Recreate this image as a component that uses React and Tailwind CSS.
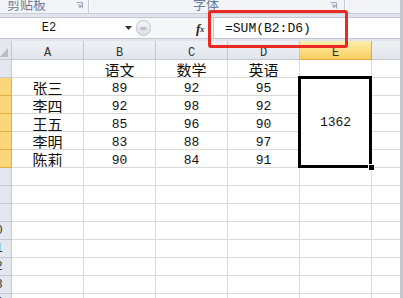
import React from "react";

const COLS = ["A", "B", "C", "D", "E", "F"];
const DATA = [
  ["", "语文", "数学", "英语"],
  ["张三", "89", "92", "95"],
  ["李四", "92", "98", "92"],
  ["王五", "85", "96", "90"],
  ["李明", "83", "88", "97"],
  ["陈莉", "90", "84", "91"],
];
const ROWS = 14;

function Launcher() {
  return (
    <svg width="7" height="7" viewBox="0 0 7 7" className="block">
      <path d="M0.5 0.5 H6.5 V6.5" fill="none" stroke="#9aa6b8" strokeWidth="1" />
      <path d="M2 2 L5 5 M5 2.6 V5 H2.6" fill="none" stroke="#8592a6" strokeWidth="1" />
    </svg>
  );
}

function isCjk(s) {
  return /[\u4e00-\u9fff]/.test(s);
}

function Cell({ text }) {
  const cjk = isCjk(text);
  return (
    <div className="border-r border-b border-[#dadada] flex items-end justify-center overflow-hidden">
      {text ? (
        cjk ? (
          <span className="font-['Noto_Sans_CJK_SC',sans-serif] text-[15px] leading-[15px] text-[#111]">{text}</span>
        ) : (
          <span className="font-['Liberation_Mono',monospace] text-[13px] leading-[13px] text-[#111]">{text}</span>
        )
      ) : null}
    </div>
  );
}

export default function App() {
  const cells = [];
  cells.push(
    <div key="corner" className="bg-[#e4e8ee] border-r border-b border-[#c2c8d1] flex items-end justify-end pr-[3px] pb-[2px]">
      <svg width="8" height="9" viewBox="0 0 8 9" className="block">
        <polygon points="0,9 8,9 8,0" fill="#b7bdc7" />
      </svg>
    </div>
  );
  COLS.forEach((c) => {
    const sel = c === "E";
    cells.push(
      <div
        key={"h" + c}
        className={
          sel
            ? "bg-gradient-to-b from-[#fdeeaa] to-[#f8cd5e] border-r border-b border-[#e2aa3c] flex items-end justify-center"
            : "bg-gradient-to-b from-[#eef1f5] to-[#e2e6ec] border-r border-b border-[#c4cad3] flex items-end justify-center"
        }
      >
        <span className="font-['Liberation_Mono',monospace] text-[12px] leading-[12px] text-[#333]">{c}</span>
      </div>
    );
  });

  for (let r = 1; r <= ROWS; r++) {
    const sel = r >= 2 && r <= 6;
    cells.push(
      <div
        key={"r" + r}
        className={
          sel
            ? "bg-[#fcd67a] border-r border-b border-[#e3ab40] flex items-center justify-center"
            : "bg-[#e4e8ee] border-r border-b border-[#c4cad3] flex items-center justify-center"
        }
      >
        <span className="font-['Liberation_Mono',monospace] text-[12px] leading-[12px] text-[#333]">{r}</span>
      </div>
    );
    const row = DATA[r - 1] || ["", "", "", ""];
    for (let ci = 0; ci < 6; ci++) {
      if (ci < 4) {
        cells.push(<Cell key={r + "-" + ci} text={row[ci]} />);
      } else if (ci === 4) {
        if (r === 2) {
          cells.push(
            <div key="merged" className="row-span-5 relative border-r border-b border-[#dadada] flex items-center justify-center">
              <span className="font-['Liberation_Mono',monospace] text-[13px] leading-[13px] text-[#111]">1362</span>
              <div className="absolute left-[-2px] top-[-2px] right-[-1px] bottom-[-1px] border-[3px] border-black" />
              <div className="absolute right-[-4px] bottom-[-4px] w-[7px] h-[7px] bg-black border border-white" />
            </div>
          );
        } else if (r >= 3 && r <= 6) {
          // covered by the merged cell
        } else {
          cells.push(<Cell key={r + "-" + ci} text="" />);
        }
      } else {
        cells.push(<Cell key={r + "-" + ci} text="" />);
      }
    }
  }

  return (
    <div className="w-[403px] h-[298px] overflow-hidden bg-white relative flex">
      <div className="w-[400px] h-full flex flex-col overflow-hidden">
        {/* Ribbon */}
        <div className="h-[14px] shrink-0 bg-[#f2f4f8] border-b border-[#c6ceda] flex overflow-hidden">
          <div className="w-[88px] flex items-start justify-between pl-[7px] pr-[5px]">
            <span className="mt-[-3px] font-['Noto_Sans_CJK_SC',sans-serif] text-[13px] leading-[13px] text-[#6a7b98]">剪贴板</span>
            <div className="mt-[2px]"><Launcher /></div>
          </div>
          <div className="w-[1px] bg-[#c3cbd7]" />
          <div className="w-[1px] bg-white" />
          <div className="w-[254px] flex items-start pl-[103px] pr-[7px]">
            <span className="mt-[-3px] font-['Noto_Sans_CJK_SC',sans-serif] text-[13px] leading-[13px] text-[#6a7b98]">字体</span>
            <div className="ml-auto mt-[2px]"><Launcher /></div>
          </div>
          <div className="w-[1px] bg-[#c3cbd7]" />
          <div className="w-[1px] bg-white" />
          <div className="flex-1" />
        </div>
        <div className="h-[3px] shrink-0 bg-[#e1e5eb]" />
        {/* Formula bar */}
        <div className="h-[22px] shrink-0 border-t border-b border-[#c3c9d2] flex bg-[#f6f7f9]">
          <div className="w-[137px] bg-white flex items-center">
            <div className="w-[98px] flex justify-center">
              <span className="font-['Liberation_Mono',monospace] text-[12px] leading-[12px] text-[#111]">E2</span>
            </div>
            <svg width="7" height="4" viewBox="0 0 7 4" className="ml-[27px] block">
              <polygon points="0,0 7,0 3.5,4" fill="#333" />
            </svg>
          </div>
          <div className="w-[15px] h-[16px] mt-[2px] -ml-[1px] rounded-full bg-gradient-to-b from-[#f4f5f7] to-[#dcdfe4] border border-[#bfc4cc] flex items-center justify-center">
            <div className="w-[7px] h-[3px] rounded-full bg-[#c9cdd3] border border-[#b2b7bf]" />
          </div>
          <div className="w-[45px]" />
          <div className="w-[17px] flex items-center">
            <span className="font-['Liberation_Serif',serif] italic font-bold text-[13px] leading-[13px] text-[#222]">f</span>
            <span className="font-['Liberation_Serif',serif] italic font-bold text-[8px] leading-[8px] text-[#222] mt-[4px]">x</span>
          </div>
          <div className="flex-1 bg-white border-l border-[#c3c9d2] flex items-center pl-[11px]">
            <span className="font-['Liberation_Mono',monospace] text-[13px] leading-[13px] text-[#111]">=SUM(B2:D6)</span>
          </div>
        </div>
        <div className="h-[2px] shrink-0 bg-[#e1e5eb]" />
        {/* Grid */}
        <div className="-ml-[20px] w-[464px] shrink-0 grid grid-cols-[32px_72px_72px_72px_72px_72px_72px] grid-rows-[19px_repeat(14,18px)]">
          {cells}
        </div>
      </div>
      <div className="w-[3px] h-full bg-[#c4c8ce]" />
      {/* Red annotation */}
      <div className="absolute left-[208px] top-[10px] w-[140px] h-[38px] border-[3px] border-[#ea2a22] rounded-[3px]" />
    </div>
  );
}
